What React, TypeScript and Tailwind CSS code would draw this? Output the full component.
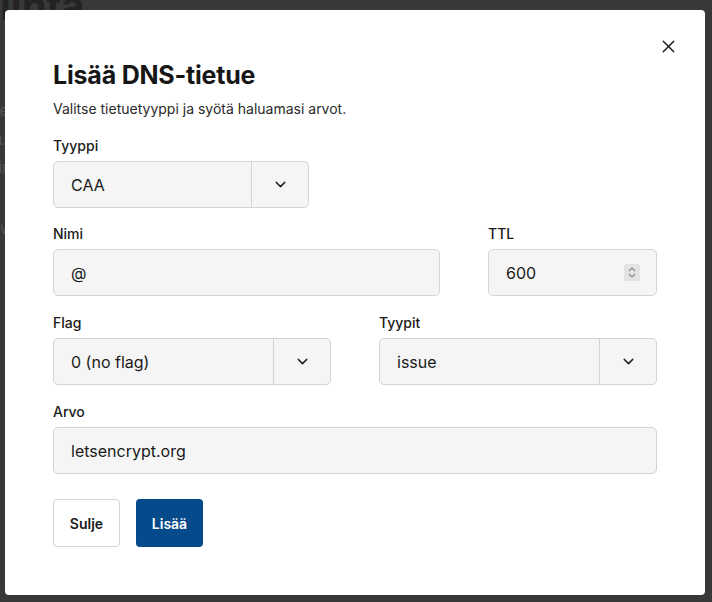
import { ChevronDown, X } from "lucide-react";

const font = { fontFamily: "Inter, 'Noto Sans', sans-serif" };

function Label({ children }: { children: React.ReactNode }) {
  return <div className="mb-[5px] text-[14px] leading-5 font-medium text-[#1a1a1a]">{children}</div>;
}

function SelectBox({ value, width }: { value: string; width: string }) {
  return (
    <div className={`flex h-[47px] ${width} rounded-[5px] border border-[#d4d4d4] bg-[#f5f5f5]`}>
      <div className="flex flex-1 items-center pl-[17px] text-[16px] text-[#1a1a1a]">{value}</div>
      <div className="flex w-[57px] items-center justify-center border-l border-[#d4d4d4]">
        <ChevronDown size={17} strokeWidth={2} className="text-[#222]" />
      </div>
    </div>
  );
}

function TextBox({ value, width, children }: { value: string; width: string; children?: React.ReactNode }) {
  return (
    <div className={`flex h-[47px] ${width} items-center justify-between rounded-[5px] border border-[#d4d4d4] bg-[#f5f5f5] pl-[17px] pr-4 text-[16px] text-[#1a1a1a]`}>
      <span>{value}</span>
      {children}
    </div>
  );
}

export default function App() {
  return (
    <div className="relative h-[602px] w-[712px] overflow-hidden bg-[#383838]" style={font}>
      {/* page behind the overlay */}
      <div className="absolute -top-[24px] -left-[64px] text-[40px] font-bold text-[#232323]">Hallinta</div>
      <div className="absolute top-[100px] -left-[10px] flex flex-col gap-[6px] text-[15px] text-[#555]">
        <span>Ser</span>
        <span>Tuo</span>
        <span>Lin</span>
        <span className="mt-8">Vw</span>
      </div>

      <div className="absolute top-[10px] left-[5px] h-[585px] w-[700px] rounded-[4px] bg-white px-12 pt-[49px]">
        <button className="absolute top-[26px] right-[26px] text-[#222]">
          <X size={21} strokeWidth={1.75} />
        </button>
        <h2 className="text-[25px] leading-8 font-bold tracking-[-0.2px] text-[#161616]">Lisää DNS-tietue</h2>
        <p className="mt-[8px] text-[14px] leading-5 text-[#2a2a2a]">Valitse tietuetyyppi ja syötä haluamasi arvot.</p>

        <div className="mt-[17px]">
          <Label>Tyyppi</Label>
          <SelectBox value="CAA" width="w-[256px]" />
        </div>

        <div className="mt-[16px] flex justify-between">
          <div>
            <Label>Nimi</Label>
            <TextBox value="@" width="w-[387px]" />
          </div>
          <div>
            <Label>TTL</Label>
            <TextBox value="600" width="w-[169px]">
              <span className="flex h-[17px] w-[16px] flex-col items-center justify-center rounded-[2px] bg-[#e3e3e3] text-[#888]">
                <svg width="8" height="11" viewBox="0 0 8 11" fill="none" stroke="currentColor" strokeWidth="1.1">
                  <path d="M1 4 L4 1 L7 4" />
                  <path d="M1 7 L4 10 L7 7" />
                </svg>
              </span>
            </TextBox>
          </div>
        </div>

        <div className="mt-[17px] flex justify-between">
          <div>
            <Label>Flag</Label>
            <SelectBox value="0 (no flag)" width="w-[278px]" />
          </div>
          <div>
            <Label>Tyypit</Label>
            <SelectBox value="issue" width="w-[278px]" />
          </div>
        </div>

        <div className="mt-[17px]">
          <Label>Arvo</Label>
          <TextBox value="letsencrypt.org" width="w-full" />
        </div>

        <div className="mt-[25px] flex gap-[16px]">
          <button className="h-[48px] w-[67px] rounded-[4px] border border-[#d4d4d4] bg-white text-[14px] font-semibold text-[#1a1a1a]">
            Sulje
          </button>
          <button className="h-[48px] w-[67px] rounded-[4px] bg-[#054a8a] text-[14px] font-semibold text-white">
            Lisää
          </button>
        </div>
      </div>
    </div>
  );
}
